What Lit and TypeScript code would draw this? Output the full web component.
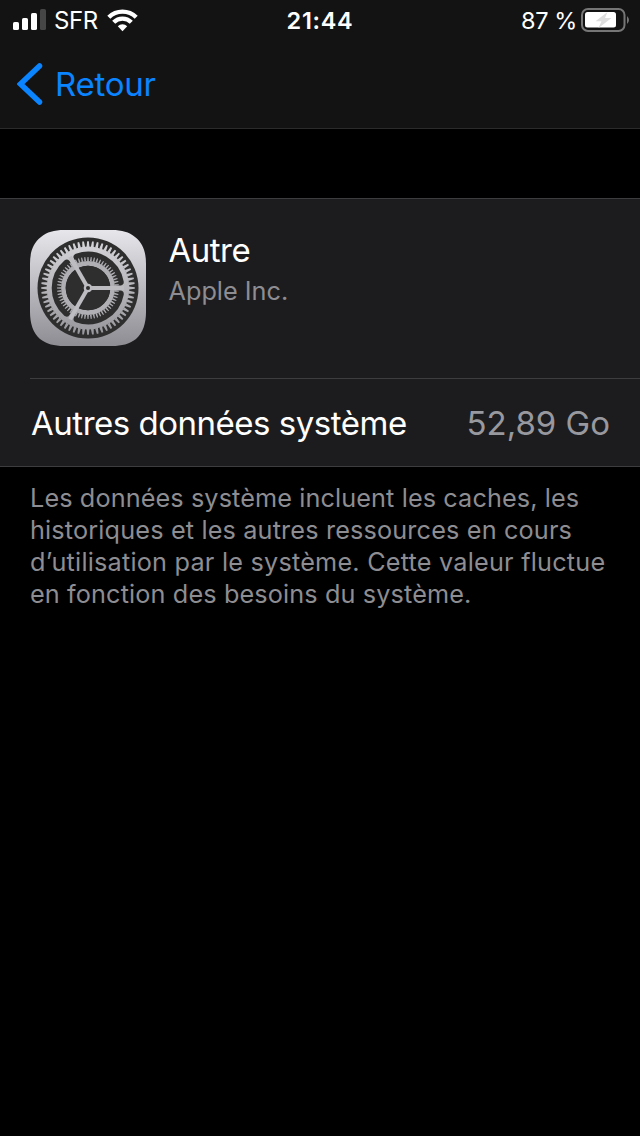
import { LitElement, html, css, svg } from "lit";
import { customElement } from "lit/decorators.js";

const polar = (r: number, deg: number): string => {
  const a = (deg * Math.PI) / 180;
  return `${(58 + r * Math.cos(a)).toFixed(2)} ${(58 + r * Math.sin(a)).toFixed(2)}`;
};

// Trapezoid teeth running from a wide base radius to a narrow tip radius.
const teeth = (count: number, base: number, tip: number, wBase: number, wTip: number): string => {
  let d = "";
  for (let i = 0; i < count; i++) {
    const c = (i * 360) / count;
    const b = (wBase / base / 2) * (180 / Math.PI);
    const t = (wTip / tip / 2) * (180 / Math.PI);
    d += `M${polar(base, c - b)}L${polar(tip, c - t)}L${polar(tip, c + t)}L${polar(base, c + b)}Z`;
  }
  return d;
};

@customElement("settings-gear")
class SettingsGear extends LitElement {
  static styles = css`
    :host { display: block; width: 116px; height: 116px; }
    svg { display: block; }
  `;
  render() {
    return html`<svg width="116" height="116" viewBox="0 0 116 116">
      <defs>
        <linearGradient id="g" gradientUnits="userSpaceOnUse" x1="0" y1="0" x2="0" y2="116">
          <stop offset="0" stop-color="#e6e6eb" />
          <stop offset="1" stop-color="#8e8d93" />
        </linearGradient>
        <linearGradient id="r" gradientUnits="userSpaceOnUse" x1="0" y1="10" x2="0" y2="106">
          <stop offset="0" stop-color="#d6d6da" />
          <stop offset="1" stop-color="#97969b" />
        </linearGradient>
      </defs>
      <path fill="url(#g)" d="M34 0H82C92 0 99 2 105 7C113 13 116 22 116 34V82C116 93 113 103 106 109C99 114 92 116 82 116H34C24 116 17 114 10 109C3 103 0 93 0 82V34C0 22 3 13 11 7C17 2 24 0 34 0Z" />
      <circle cx="58" cy="58" r="50.5" fill="#2e2e2e" />
      <circle cx="58" cy="58" r="41.4" fill="url(#r)" />
      <path d=${teeth(60, 41, 46.8, 2.9, 1.7)} fill="url(#r)" />
      ${[0, 120, 240].map((a) => svg`<path transform="rotate(${a} 58 58)" d="M63.5 64L90.3 64A32.8 32.8 0 0 1 47.1 88.9L60.4 65.8Z" fill="#2e2e2e" stroke="#2e2e2e" stroke-width="7" stroke-linejoin="round" />`)}
      <circle cx="58" cy="58" r="24.6" fill="none" stroke="#b0afb4" stroke-width="4.6" />
      <path d=${teeth(60, 26.7, 31, 1.7, 1)} fill="#b0afb4" />
      <circle cx="58" cy="58" r="22.3" fill="#2e2e2e" />
      ${[0, 120, 240].map((a) => svg`<path transform="rotate(${a} 58 58)" d="M58 56H94V60H58Z" fill="#bdbcc1" />`)}
      <circle cx="58" cy="58" r="4.3" fill="#bdbcc1" />
      <circle cx="58" cy="58" r="2" fill="#2e2e2e" />
    </svg>`;
  }
}

@customElement("app-root")
class AppRoot extends LitElement {
  static styles = css`
    :host {
      display: block; width: 640px; height: 1136px; overflow: hidden;
      background: #000; color: #fff; font-family: Inter, sans-serif;
    }
    * { box-sizing: border-box; }
    svg { display: block; flex: none; }
    .top { height: 129px; background: #131313; border-bottom: 1px solid #2b2b2c; }
    .status {
      height: 40px; display: grid; grid-template-columns: 1fr auto 1fr; align-items: center;
      padding: 0 11px 0 13px; font-size: 24px; line-height: 38px; white-space: nowrap;
    }
    .left, .right { display: flex; align-items: center; }
    .right { justify-content: flex-end; gap: 4px; }
    .carrier, .time, .percent { padding-top: 2px; }
    .carrier { margin: 0 9px 0 8px; letter-spacing: -0.4px; }
    .time { font-weight: 600; font-size: 23.5px; letter-spacing: 0.7px; margin-right: 2px; }
    .percent { font-size: 23.5px; letter-spacing: -0.4px; }
    .back { display: flex; align-items: center; height: 88px; padding-left: 17px; gap: 12px; color: #0a84ff; font-size: 33px; letter-spacing: -0.25px; }
    .group { margin-top: 69px; background: #1c1c1e; border: solid #3d3d40; border-width: 1px 0; height: 269px; }
    .app { display: flex; gap: 22.5px; margin-left: 30px; padding-top: 31px; height: 180px; border-bottom: 1px solid #3d3d40; }
    .name { font-size: 33px; line-height: 41px; letter-spacing: -0.5px; }
    .vendor { font-size: 25.25px; line-height: 41px; color: #8d8d92; }
    .row { display: flex; justify-content: space-between; padding: 0 30px 0 31px; line-height: 89px; font-size: 33px; white-space: nowrap; }
    .label { letter-spacing: -0.48px; }
    .value { color: #98989f; }
    .note { margin: 15px 0 0 30px; font-size: 25.25px; line-height: 32px; color: #8d8d92; white-space: nowrap; }
    .n1 { letter-spacing: 0.1px; }
    .n2 { letter-spacing: 0.15px; }
    .n3 { letter-spacing: 0.21px; }
    .n4 { letter-spacing: 0.12px; }
  `;
  render() {
    return html`
      <header class="top">
        <div class="status">
          <div class="left">
            <svg width="33" height="22" viewBox="0 0 33 22">
              <g fill="#fff">
                <rect y="13" width="6" height="8" rx="1.6" />
                <rect x="9" y="9" width="6" height="12" rx="1.6" />
                <rect x="18" y="4" width="6" height="17" rx="1.6" />
              </g>
              <rect x="27" width="6" height="21" rx="1.6" fill="#464646" />
            </svg>
            <span class="carrier">SFR</span>
            <svg width="31" height="23" viewBox="0 0 31 23">
              <g fill="none" stroke="#fff" stroke-width="4.3">
                <path d="M1.8 8.2A19.4 19.4 0 0 1 29.2 8.2" />
                <path d="M6.7 13.2A12.4 12.4 0 0 1 24.3 13.2" />
              </g>
              <path d="M10.8 17.3A6.7 6.7 0 0 1 20.2 17.3L15.5 22.2Z" fill="#fff" />
            </svg>
          </div>
          <span class="time">21:44</span>
          <div class="right">
            <span class="percent">87 %</span>
            <svg width="48" height="24" viewBox="0 0 48 24">
              <rect x="1" y="1" width="42.5" height="22" rx="6" fill="none" stroke="#767676" stroke-width="2" />
              <rect x="4" y="4" width="31" height="15.5" rx="2.5" fill="#fff" />
              <path d="M26.5 4L14.5 13.2H20.5L17.5 20L30.5 10H24Z" fill="#dedede" />
              <path d="M46 8V16Q48 14 48 12T46 8Z" fill="#767676" />
            </svg>
          </div>
        </div>
        <div class="back">
          <svg width="26" height="42" viewBox="0 0 26 42"><path d="M22.5 3L3.5 21L22.5 39" fill="none" stroke="#0a84ff" stroke-width="5.5" stroke-linecap="round" stroke-linejoin="miter" /></svg>
          <span class="backlabel">Retour</span>
        </div>
      </header>
      <section class="group">
        <div class="app">
          <settings-gear></settings-gear>
          <div><div class="name">Autre</div><div class="vendor"><span>Apple Inc.</span></div></div>
        </div>
        <div class="row"><span class="label">Autres données système</span><span class="value">52,89 Go</span></div>
      </section>
      <div class="note">
        <div><span class="n1">Les données système incluent les caches, les</span></div>
        <div><span class="n2">historiques et les autres ressources en cours</span></div>
        <div><span class="n3">d’utilisation par le système. Cette valeur fluctue</span></div>
        <div><span class="n4">en fonction des besoins du système.</span></div>
      </div>
    `;
  }
}
